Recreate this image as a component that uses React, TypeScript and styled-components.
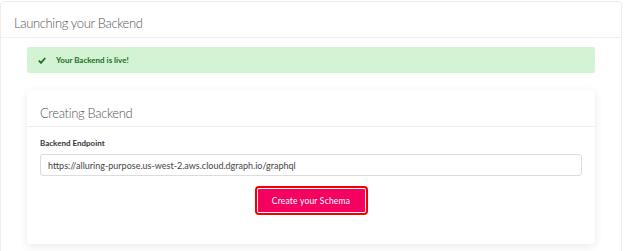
import * as React from "react";
import styled, { createGlobalStyle } from "styled-components";

const Global = createGlobalStyle`
  body {
    margin: 0;
    background: #ffffff;
    font-family: Lato, "Liberation Sans", sans-serif;
  }
`;

const Page = styled.div`
  width: 624px;
  height: 251px;
  overflow: hidden;
  padding: 1px 2px 0 0;
  box-sizing: border-box;
`;

const OuterCard = styled.div`
  border: 1px solid #ececec;
  border-radius: 4px;
  height: 300px;
  background: #fff;
`;

// section headers share the same light title look
const Header = styled.div<{ $height: number; $top: number }>`
  height: ${(p) => p.$height}px;
  padding: ${(p) => p.$top}px 13px 0;
  box-sizing: border-box;
  display: flex;
  align-items: center;
  border-bottom: 1px solid #efefef;
  font-size: 13px;
  font-weight: 300;
  letter-spacing: -0.35px;
  color: #555;
`;

const Body = styled.div`
  padding: 9px 26px;
  display: flex;
  flex-direction: column;
  gap: 17px;
`;

const Alert = styled.div`
  height: 26px;
  background: #d4f3d4;
  border-radius: 2px;
  display: flex;
  align-items: center;
  padding-left: 11px;
  gap: 10px;
  color: #1a6e1c;
  font-size: 8px;
  font-weight: 700;
`;

const InnerCard = styled.div`
  background: #fff;
  border-radius: 4px;
  box-shadow: 0 2px 8px rgba(0, 0, 0, 0.09);
  height: 154px;
`;

const Form = styled.div`
  padding: 11px 13px 0;
  display: flex;
  flex-direction: column;
`;

const Label = styled.div`
  font-size: 8px;
  font-weight: 700;
  color: #333;
  margin-bottom: 6px;
`;

const Input = styled.div`
  height: 20px;
  border: 1px solid #dcdcdc;
  border-radius: 3px;
  display: flex;
  align-items: center;
  padding-left: 7px;
  font-size: 9px;
  color: #444;
`;

const ButtonRow = styled.div`
  display: flex;
  justify-content: center;
  margin-top: 13px;
`;

const Button = styled.div`
  width: 107px;
  height: 23px;
  background: #f5015f;
  border-radius: 1px;
  color: #fff;
  font-size: 8.5px;
  letter-spacing: 0.2px;
  display: flex;
  align-items: center;
  justify-content: center;
  outline: 2px solid #f40000;
  outline-offset: 1px;
`;

const Check = () => (
  <svg width="8" height="7" viewBox="0 0 8 7">
    <path d="M0.8 3.6 L3 5.8 L7.2 1" stroke="#1a6e1c" strokeWidth="1.8" fill="none" />
  </svg>
);

export default function App() {
  return (
    <Page>
      <Global />
      <OuterCard>
        <Header $height={36} $top={6}>Launching your Backend</Header>
        <Body>
          <Alert>
            <Check />
            Your Backend is live!
          </Alert>
          <InnerCard>
            <Header $height={37} $top={10}>Creating Backend</Header>
            <Form>
              <Label>Backend Endpoint</Label>
              <Input>https://alluring-purpose.us-west-2.aws.cloud.dgraph.io/graphql</Input>
              <ButtonRow>
                <Button>Create your Schema</Button>
              </ButtonRow>
            </Form>
          </InnerCard>
        </Body>
      </OuterCard>
    </Page>
  );
}
